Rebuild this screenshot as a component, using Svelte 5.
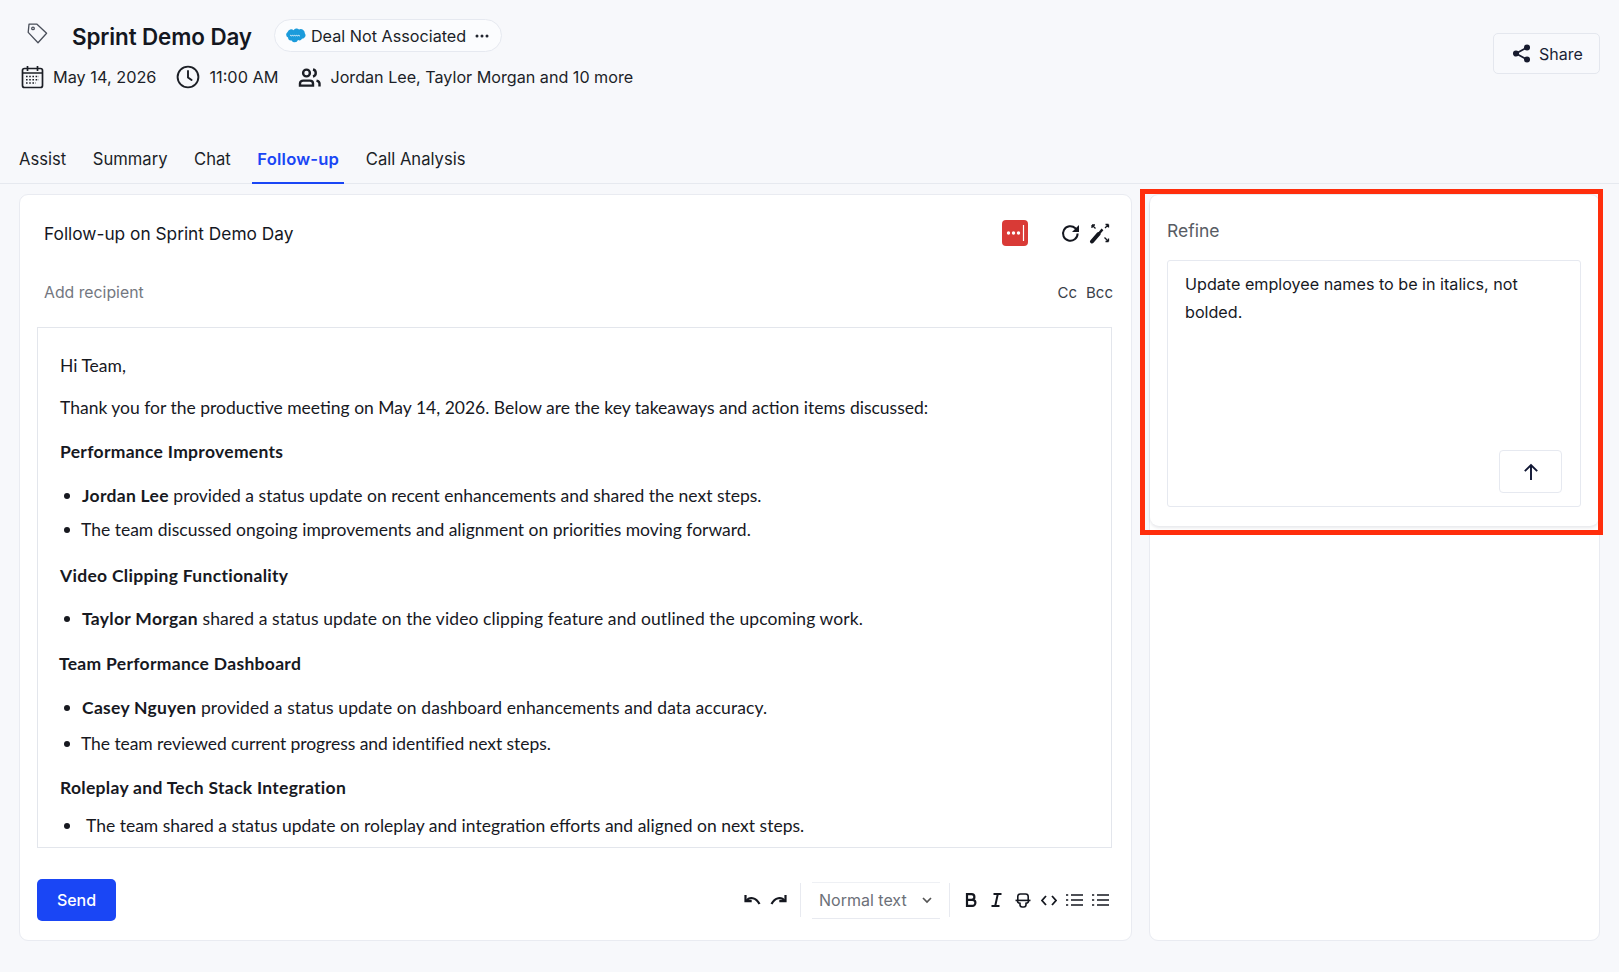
<script>
  const tabs = ["Assist", "Summary", "Chat", "Follow-up", "Call Analysis"];
  const active = "Follow-up";
</script>

<div class="page">
  <header class="top">
    <div class="top-left">
      <div class="title-row">
        <svg class="tag" width="21" height="21" viewBox="0 0 21 21" fill="none" stroke="#4a4f5a" stroke-width="1.3" stroke-linejoin="round">
          <path d="M2 1.2h8l9.6 9-8.6 9.6L1.2 9.4z" />
          <circle cx="6" cy="5.4" r="1.3" />
        </svg>
        <h1>Sprint Demo Day</h1>
        <div class="pill">
          <svg width="21" height="15" viewBox="0 0 21 15">
            <path fill="#1b9bdb" d="M8.6 2.2A3.5 3.5 0 0 1 14 1.5a4 4 0 0 1 5.8 3.7 3.5 3.5 0 0 1-2.8 5.6 3 3 0 0 1-4 1.3 3.5 3.5 0 0 1-6.4.3A3.1 3.1 0 0 1 3 9.6a3.3 3.3 0 0 1-.4-5.7 3.7 3.7 0 0 1 6-1.7z" />
            <path stroke="#fff" stroke-width="0.9" fill="none" d="M5 7.6c1-.8 1 .8 2 0s1 .8 2 0 1 .8 2 0 1 .8 2 0 1 .8 2 0" />
          </svg>
          <span>Deal Not Associated</span>
          <svg width="14" height="4" viewBox="0 0 14 4" fill="#20242e"><circle cx="2" cy="2" r="1.5" /><circle cx="7" cy="2" r="1.5" /><circle cx="12" cy="2" r="1.5" /></svg>
        </div>
      </div>
      <div class="meta-row">
        <svg width="23" height="24" viewBox="0 0 23 24" fill="none" stroke="#1c1f26" stroke-width="1.7">
          <rect x="1.5" y="3.5" width="20" height="19" rx="2" />
          <path d="M1.5 8h20M6.5 1v5M16.5 1v5" />
          <path stroke-width="1.6" stroke-dasharray="1.6 1.6" d="M5 11.5h13M5 14.7h13M5 18h10" />
        </svg>
        <span class="date">May 14, 2026</span>
        <svg class="clock" width="24" height="24" viewBox="0 0 24 24" fill="none" stroke="#1c1f26" stroke-width="1.9" stroke-linecap="round">
          <circle cx="12" cy="12" r="10.4" />
          <path d="M12 6v6.4l3.6 2.6" />
        </svg>
        <span class="time">11:00 AM</span>
        <svg class="people" width="23" height="19" viewBox="0 0 23 19" fill="none" stroke="#1c1f26" stroke-width="2.4">
          <circle cx="8.5" cy="5" r="3.4" />
          <path d="M2 17.6v-2c0-1.8 1.4-3 3.2-3h6.6c1.8 0 3.2 1.2 3.2 3v2z" />
          <path d="M15 1.5a3.6 3.6 0 0 1 0 7M18.5 12.6c1.8.4 3 1.5 3 3v3" />
        </svg>
        <span class="people-text">Jordan Lee, Taylor Morgan and 10 more</span>
      </div>
    </div>
    <button class="share">
      <svg width="19" height="19" viewBox="0 0 19 19" fill="#171b2e" stroke="#171b2e" stroke-width="1.7">
        <circle cx="15" cy="3.5" r="2.2" /><circle cx="4" cy="9.5" r="2.2" /><circle cx="15" cy="15.5" r="2.2" />
        <path fill="none" d="M15 3.5 4 9.5l11 6" />
      </svg>
      Share
    </button>
  </header>

  <nav class="tabs">
    {#each tabs as tab}
      <button class="tab" class:active={tab === active}>{tab}</button>
    {/each}
  </nav>

  <main class="content">
    <section class="card mail">
      <div class="subject">
        <span class="subject-text">Follow-up on Sprint Demo Day</span>
        <span class="pw-icon">
          <svg width="26" height="26" viewBox="0 0 26 26">
            <rect width="26" height="26" rx="4" fill="#d93a36" />
            <circle cx="6.5" cy="13" r="1.7" fill="#fff" /><circle cx="11.5" cy="13" r="1.7" fill="#fff" /><circle cx="16.5" cy="13" r="1.7" fill="#fff" />
            <path d="M21.5 5v16" stroke="#fff" stroke-width="1.2" />
          </svg>
        </span>
        <svg class="refresh" width="19" height="19" viewBox="0 0 19 19" fill="none" stroke="#14171f" stroke-width="2">
          <path d="M16.6 9.5a7.3 7.3 0 1 1-2.2-5.2L17 6.6" />
          <path fill="#14171f" stroke="none" d="M18 1v7h-7z" />
        </svg>
        <svg class="wand" width="22" height="22" viewBox="0 0 22 22" fill="none" stroke="#14171f" stroke-width="1.3">
          <path stroke-width="4" stroke-linecap="round" d="M3 19.5 9.5 12" />
          <path stroke-width="2.4" d="m9.5 12 4-4.6" />
          <path d="M3 3 6.5 6.5M3 3h3M3 3v3M19.5 2.5 16 6M19.5 2.5h-3M19.5 2.5v3M15.5 15.5l4 4M19.5 19.5h-3M19.5 19.5v-3" />
        </svg>
      </div>
      <div class="recipient">
        <span class="add">Add recipient</span>
        <span class="cc">Cc</span>
        <span class="cc bcc">Bcc</span>
      </div>

      <div class="editor">
        <p>Hi Team,</p>
        <p class="next">Thank you for the productive meeting on May 14, 2026. Below are the key takeaways and action items discussed:</p>

        <h4>Performance Improvements</h4>
        <ul>
          <li><b>Jordan Lee</b> provided a status update on recent enhancements and shared the next steps.</li>
          <li class="plain">The team discussed ongoing improvements and alignment on priorities moving forward.</li>
        </ul>

        <h4 class="wide">Video Clipping Functionality</h4>
        <ul class="close">
          <li class="loose"><b>Taylor Morgan</b> shared a status update on the video clipping feature and outlined the upcoming work.</li>
        </ul>

        <h4 class="pull">Team Performance Dashboard</h4>
        <ul>
          <li class="loose"><b>Casey Nguyen</b> provided a status update on dashboard enhancements and data accuracy.</li>
          <li class="plain spaced tight">The team reviewed current progress and identified next steps.</li>
        </ul>

        <h4>Roleplay and Tech Stack Integration</h4>
        <ul class="closest">
          <li class="indent">The team shared a status update on roleplay and integration efforts and aligned on next steps.</li>
        </ul>
      </div>

      <div class="actions">
        <button class="send">Send</button>
        <div class="toolbar">
          <svg class="undo" width="18" height="13" viewBox="0 0 18 13" fill="none" stroke="#14171f" stroke-width="2.2">
            <path d="M2.5 1v6.2h6.2" />
            <path d="M3 7c3.6-4.6 10-3.8 13.5 3" />
          </svg>
          <svg class="redo" width="18" height="13" viewBox="0 0 18 13" fill="none" stroke="#14171f" stroke-width="2.2">
            <path d="M15.5 1v6.2H9.3" />
            <path d="M15 7c-3.6-4.6-10-3.8-13.5 3" />
          </svg>
          <span class="divider first"></span>
          <div class="select">
            <span>Normal text</span>
            <svg width="10" height="7" viewBox="0 0 10 7" fill="none" stroke="#555" stroke-width="1.7"><path d="m1 1 4 4 4-4" /></svg>
          </div>
          <span class="divider"></span>
          <svg class="bold" width="12" height="14" viewBox="0 0 12 14" fill="none" stroke="#14171f" stroke-width="2.2">
            <path d="M2 1.2v11.6h5.4a3 3 0 0 0 0-6H2h4.6a2.8 2.8 0 0 0 0-5.6z" />
          </svg>
          <svg class="italic" width="11" height="14" viewBox="0 0 11 14" fill="none" stroke="#14171f" stroke-width="2">
            <path d="M2.5 1h8M.5 13h8M6.8 1 4.2 13" />
          </svg>
          <svg class="strike" width="16" height="15" viewBox="0 0 16 15" fill="none" stroke="#14171f" stroke-width="1.6">
            <path d="M2.8 7V3.6A2.6 2.6 0 0 1 5.4 1h5.2a2.6 2.6 0 0 1 2.6 2.6V7" />
            <path d="M.5 7.4h15" />
            <path d="M2.4 7.4c0 1.6.8 2.6 2.6 2.8v1.6a2.2 2.2 0 0 0 2.2 2.2h1.6a2.2 2.2 0 0 0 2.2-2.2v-1.6c1.8-.2 2.6-1.2 2.6-2.8" />
          </svg>
          <svg class="code" width="16" height="11" viewBox="0 0 16 11" fill="none" stroke="#14171f" stroke-width="1.8">
            <path d="M5 1 1 5.5 5 10M11 1l4 4.5L11 10" />
          </svg>
          <svg class="list" width="17" height="14" viewBox="0 0 17 14" fill="none" stroke="#14171f" stroke-width="1.6">
            <path d="M5 2h12M5 7h12M5 12h12M0 2h2.2M0 7h2.2M0 12h2.2" />
          </svg>
          <svg class="list" width="17" height="14" viewBox="0 0 17 14" fill="none" stroke="#14171f" stroke-width="1.6">
            <path d="M5 2h12M5 7h12M5 12h12M0 2h2.2M0 7h2.2M0 12h2.2" />
          </svg>
        </div>
      </div>
    </section>

    <aside class="card side">
      <div class="refine">
        <div class="refine-label">Refine</div>
        <div class="refine-box">
          <p>Update employee names to be in italics, not bolded.</p>
          <button class="submit" aria-label="Submit">
            <svg width="18" height="18" viewBox="0 0 18 18" fill="none" stroke="#101634" stroke-width="1.9">
              <path d="M9 17V2M2.8 8.2 9 2l6.2 6.2" />
            </svg>
          </button>
        </div>
      </div>
      <div class="highlight"></div>
    </aside>
  </main>
</div>

<style>
  :global(body) {
    background: #f7f8fb;
  }

  .page {
    height: 972px;
    overflow: hidden;
    display: flex;
    flex-direction: column;
    font-family: Inter, "Liberation Sans", sans-serif;
    color: #14171f;
    background: #f7f8fb;
  }

  button {
    font-family: inherit;
  }

  .top {
    height: 133px;
    box-sizing: border-box;
    padding: 19px 19px 0 21px;
    display: flex;
    justify-content: space-between;
    align-items: flex-start;
  }

  .title-row {
    display: flex;
    align-items: center;
    height: 33px;
  }

  .tag {
    margin-left: 6px;
    margin-top: -4px;
  }

  h1 {
    margin: 2px 0 0 24px;
    font-size: 22.4px;
    font-weight: 600;
    letter-spacing: -0.1px;
    line-height: 33px;
  }

  .pill {
    margin-left: 22px;
    height: 33px;
    width: 228px;
    box-sizing: border-box;
    border: 1px solid #e6e9f0;
    border-radius: 17px;
    background: #fbfcfe;
    display: flex;
    align-items: center;
    padding-left: 10px;
    font-size: 16.2px;
    color: #1c1f28;
  }

  .pill span {
    margin-left: 5px;
    margin-right: 9px;
  }

  .meta-row {
    margin-top: 10px;
    height: 30px;
    display: flex;
    align-items: center;
    font-size: 16.3px;
    color: #1c1f28;
  }

  .date {
    margin-left: 9px;
  }

  .clock {
    margin-left: 20px;
  }

  .time {
    margin-left: 9px;
  }

  .people {
    margin-left: 20px;
    margin-right: 9px;
  }

  .people-text {
    font-size: 16.15px;
  }

  .share {
    margin-top: 14px;
    width: 107px;
    height: 41px;
    border: 1px solid #e4e7ee;
    border-radius: 5px;
    background: #f8f9fc;
    display: flex;
    align-items: center;
    justify-content: center;
    gap: 8px;
    padding-left: 8px;
    font-size: 16px;
    color: #1a1f36;
  }

  .tabs {
    height: 51px;
    box-sizing: border-box;
    padding-left: 14px;
    border-bottom: 1px solid #e6e9ef;
    display: flex;
    align-items: stretch;
    gap: 16.6px;
  }

  .tab {
    background: none;
    border: none;
    border-bottom: 2px solid transparent;
    margin-bottom: -1px;
    padding: 2px 5px 0;
    font-size: 16.6px;
    color: #1c1f28;
  }

  .tab.active {
    color: #1a46f5;
    font-weight: 600;
    letter-spacing: 0.2px;
    border-bottom-color: #1a46f5;
  }

  .content {
    flex: none;
    display: flex;
    gap: 17px;
    padding: 10px 19px 0;
  }

  .card {
    background: #fff;
    border: 1px solid #e9ebf1;
    border-radius: 9px;
    box-sizing: border-box;
    height: 747px;
  }

  .mail {
    width: 1113px;
    padding: 0 19px 0 17px;
  }

  .subject {
    height: 76px;
    display: flex;
    align-items: center;
    padding: 0 0 0 7px;
  }

  .subject-text {
    font-size: 17.3px;
    flex: 1;
    margin-top: 1px;
  }

  .pw-icon {
    display: flex;
    margin-right: 33px;
  }

  .refresh {
    margin-right: 9px;
  }

  .wand {
    margin-right: 1px;
  }

  .recipient {
    height: 53px;
    margin-top: 3px;
    display: flex;
    align-items: flex-start;
    padding: 5px 0 0 7px;
    box-sizing: border-box;
    font-size: 15.8px;
    line-height: 27px;
  }

  .add {
    flex: 1;
    color: #73777f;
  }

  .cc {
    color: #3a3e48;
    font-size: 15px;
  }

  .bcc {
    margin-left: 9px;
    margin-right: -1px;
  }

  .editor {
    height: 521px;
    box-sizing: border-box;
    border: 1px solid #e3e6ec;
    padding: 26px 0 0 22px;
    overflow: hidden;
    font-family: Lato, "Noto Sans", sans-serif;
    font-size: 17.5px;
    line-height: 24px;
    color: #17191f;
  }

  .editor p {
    margin: 0;
  }

  .editor .next {
    margin-top: 18px;
  }

  h4 {
    margin: 20px 0;
    font-size: 17.5px;
    font-weight: 700;
    letter-spacing: 0.3px;
  }

  h4.wide {
    margin-top: 22px;
    margin-bottom: 19px;
  }

  h4.pull {
    margin-top: 21px;
    margin-left: -1px;
  }

  ul {
    list-style: none;
    margin: 0;
    padding: 0;
  }

  ul.closest {
    margin-top: -6px;
  }

  li {
    padding-left: 22px;
    position: relative;
  }

  li::before {
    content: "";
    position: absolute;
    left: 4px;
    top: 9px;
    width: 6px;
    height: 6px;
    border-radius: 50%;
    background: #17191f;
  }

  li b {
    font-weight: 700;
    letter-spacing: 0.3px;
  }

  li.loose {
    letter-spacing: 0.09px;
  }

  li.tight {
    letter-spacing: -0.07px;
  }

  li.plain {
    margin-top: 10px;
    padding-left: 21px;
  }

  li.spaced {
    margin-top: 12px;
  }

  li.indent {
    padding-left: 26px;
  }

  .actions {
    margin-top: 31px;
    display: flex;
    justify-content: space-between;
    align-items: center;
  }

  .send {
    width: 79px;
    height: 42px;
    border: none;
    border-radius: 5px;
    background: #1a46f5;
    color: #fff;
    font-size: 16px;
    font-weight: 500;
  }

  .toolbar {
    display: flex;
    align-items: center;
    margin-right: 3px;
  }

  .redo {
    margin-left: 9px;
  }

  .divider {
    width: 1px;
    height: 34px;
    background: #e8eaf0;
    margin: 0 9px;
  }

  .divider.first {
    margin: 0 11px 0 12px;
  }

  .select {
    width: 128px;
    height: 37px;
    box-sizing: border-box;
    border-top: 1px solid #eef0f4;
    border-bottom: 1px solid #e8eaf0;
    padding: 0 8px 0 7px;
    display: flex;
    align-items: center;
    justify-content: space-between;
    font-size: 16px;
    color: #6c7078;
  }

  .bold {
    margin-left: 6px;
  }

  .italic {
    margin-left: 14px;
  }

  .strike {
    margin-left: 13px;
  }

  .code {
    margin-left: 10px;
  }

  .list {
    margin-left: 9px;
  }

  .side {
    width: 451px;
    position: relative;
  }

  .refine {
    height: 331px;
    box-sizing: border-box;
    padding: 22px 18px 0 17px;
    border-radius: 9px;
    box-shadow: 0 2px 3px rgba(30, 40, 70, 0.1);
  }

  .refine-label {
    font-size: 17.5px;
    line-height: 28px;
    color: #585c64;
  }

  .refine-box {
    margin-top: 15px;
    height: 247px;
    box-sizing: border-box;
    border: 1px solid #e6e9f0;
    border-radius: 3px;
    padding: 10px 16px 0 17px;
    position: relative;
  }

  .refine-box p {
    margin: 0;
    width: 360px;
    font-size: 16.15px;
    line-height: 27.5px;
    color: #17191f;
  }

  .submit {
    position: absolute;
    right: 18px;
    bottom: 13px;
    width: 63px;
    height: 43px;
    border: 1px solid #e6e9f0;
    border-radius: 4px;
    background: #fff;
    display: flex;
    align-items: center;
    justify-content: center;
  }

  .highlight {
    position: absolute;
    left: -10px;
    top: -6px;
    width: 463px;
    height: 346px;
    box-sizing: border-box;
    border: 5px solid #ff2e0c;
    pointer-events: none;
  }
</style>
